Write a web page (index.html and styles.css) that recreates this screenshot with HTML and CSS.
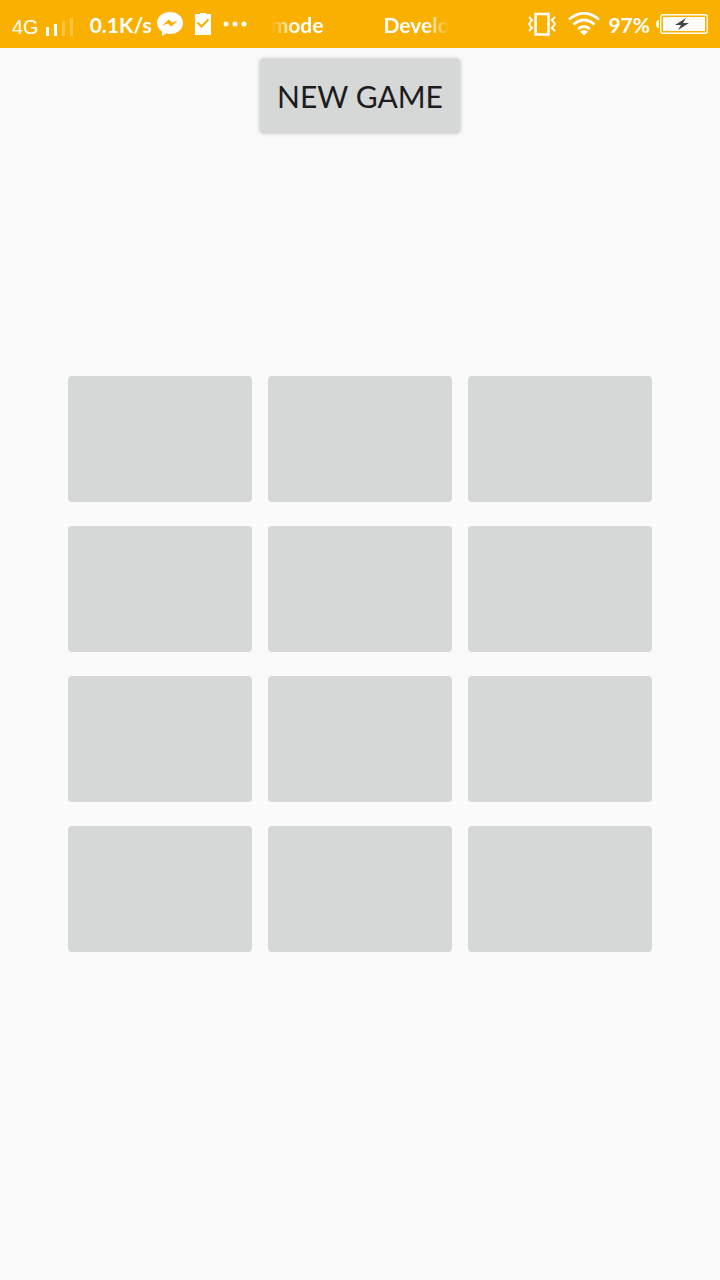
FILE: index.html
```html
<!DOCTYPE html>
<html lang="en">
<head>
<meta charset="utf-8">
<meta name="viewport" content="width=device-width, initial-scale=1">
<title>New Game</title>
<link rel="stylesheet" href="styles.css">
</head>
<body>
<header class="status">
  <span class="network">4G</span>
  <svg class="signal" width="28" height="20" viewBox="0 0 28 20" fill="#fff" aria-hidden="true"><path d="M0 10h3v9H0zM8 7h3v12H8z"/><path opacity=".25" d="M16 4h3v15h-3zM24 1h3v18h-3z"/></svg>
  <span class="label speed">0.1K/s</span>
  <div class="notices">
    <svg width="26" height="24" viewBox="0 0 26 24" aria-hidden="true"><path fill="#fff" d="M13 0C5.500 0 0 4.800 0 11c0 3.500 1.800 6.600 5 8.600V24l4.200-2.400c1.200.3 2.500.4 3.800.4 7.500 0 13-4.800 13-11S20.500 0 13 0z"/><path fill="#fab001" d="M5 14l6.500-6.500 4 3L21 8l-6.500 6.500-4-3z"/></svg>
    <svg width="16" height="22" viewBox="0 0 16 22" aria-hidden="true"><path fill="#fff" d="M0 1h5V0h6v1h5v21H0z"/><path fill="none" stroke="#fab001" stroke-width="2" d="M2.500 9.500l4 4 7-7"/></svg>
    <svg width="24" height="6" viewBox="0 0 24 6" fill="#fff" aria-hidden="true"><circle cx="3" cy="3" r="2.500"/><circle cx="12" cy="3" r="2.500"/><circle cx="21" cy="3" r="2.500"/></svg>
  </div>
  <div class="label ticker"><span>mode</span><span>Develo</span></div>
  <div class="system">
    <svg width="28" height="24" viewBox="0 0 28 24" fill="none" stroke="#fff" stroke-width="2" aria-hidden="true"><path stroke-width="2.500" d="M7.500 2h13v20.500h-13z"/><path d="M1 5l3 3-3 4 3 4-3 3M27 5l-3 3 3 4-3 4 3 3"/></svg>
    <svg class="wifi" width="32" height="24" viewBox="0 0 32 24" fill="none" stroke="#fff" stroke-width="2.700" aria-hidden="true"><path d="M1 7.500q15-12.500 30 0M5.500 12.500q10.500-9 21 0M10 17q6-5 12 0"/><path fill="#fff" stroke="none" d="M12 19.500q4-3 8 0L16 23.500z"/></svg>
    <span class="label">97%</span>
    <svg class="battery" width="52" height="20" viewBox="0 0 52 20" aria-hidden="true"><path fill="#fff" d="M3 6v8H2q-2-1-2-4t2-4zM7 3h42v14H7z"/><rect x="4.750" y=".750" width="46.500" height="18.500" rx="2" fill="none" stroke="#fff" stroke-width="1.300"/><path fill="#444" d="M30 4l-11 7h6l-3 5 11-7h-6z"/></svg>
  </div>
</header>
<main class="game">
  <div class="top"><button class="new-game" type="button">NEW GAME</button></div>
  <div class="board">
    <button class="cell" type="button" aria-label="Card 1"></button>
    <button class="cell" type="button" aria-label="Card 2"></button>
    <button class="cell" type="button" aria-label="Card 3"></button>
    <button class="cell" type="button" aria-label="Card 4"></button>
    <button class="cell" type="button" aria-label="Card 5"></button>
    <button class="cell" type="button" aria-label="Card 6"></button>
    <button class="cell" type="button" aria-label="Card 7"></button>
    <button class="cell" type="button" aria-label="Card 8"></button>
    <button class="cell" type="button" aria-label="Card 9"></button>
    <button class="cell" type="button" aria-label="Card 10"></button>
    <button class="cell" type="button" aria-label="Card 11"></button>
    <button class="cell" type="button" aria-label="Card 12"></button>
  </div>
</main>
</body>
</html>
```
FILE: styles.css
```css
* {
  box-sizing: border-box;
}

body {
  margin: 0;
  min-height: 100vh;
  display: flex;
  flex-direction: column;
  background: #fafafa;
  font-family: Lato, "Open Sans", sans-serif;
}

svg {
  display: block;
  flex: none;
}

.status {
  display: flex;
  align-items: center;
  height: 48px;
  padding: 0 12px;
  background: #fab001;
  color: #fff;
  white-space: nowrap;
}

.network {
  padding-top: 6px;
  font: 20px/24px "Liberation Sans", sans-serif;
}

.signal {
  margin: 6px 16px 0 7px;
}

.label {
  padding-top: 2px;
  font-size: 21px;
  font-weight: 700;
  line-height: 28px;
}

.speed {
  width: 67px;
}

.notices {
  display: flex;
  align-items: center;
  gap: 12px;
}

.ticker {
  display: flex;
  gap: 60px;
  width: 178px;
  margin-left: 24px;
  overflow: hidden;
  mask-image: linear-gradient(to right, transparent, #000 24px, #000 calc(100% - 24px), transparent);
}

.system {
  display: flex;
  align-items: center;
  margin-left: auto;
}

.wifi {
  margin: 0 8px 0 12px;
}

.battery {
  margin-left: 6px;
}

.game {
  flex: 1;
  display: grid;
  grid-template-rows: 1fr auto 1fr;
}

.top {
  padding-top: 11px;
  text-align: center;
}

.new-game,
.cell {
  border: 0;
  border-radius: 4px;
  background: #d6d8d7;
}

.new-game {
  padding: 16px 17px;
  color: #1c1c1c;
  font: 30px/42px Lato, "Open Sans", sans-serif;
  box-shadow: 0 0 4px rgba(0, 0, 0, 0.25);
}

.board {
  display: grid;
  grid-template-columns: repeat(3, 1fr);
  gap: 24px 16px;
  padding: 0 68px;
}

.cell {
  height: 126px;
}
```
